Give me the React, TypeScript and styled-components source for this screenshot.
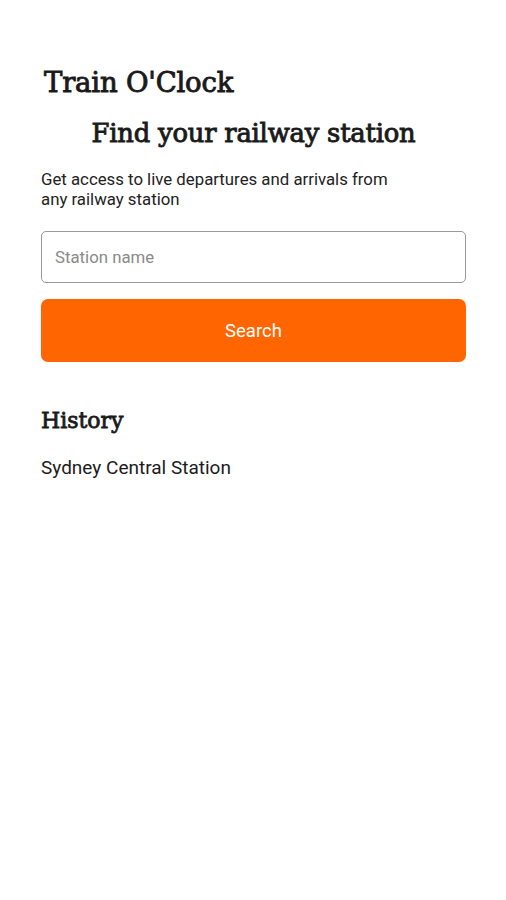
import React, { useState } from 'react'
import styled, { createGlobalStyle } from 'styled-components'

const GlobalStyle = createGlobalStyle`
  html, body {
    margin: 0;
    padding: 0;
    background: #ffffff;
  }
  body {
    font-family: Roboto, "Liberation Sans", sans-serif;
    color: #1c1c1c;
  }
`

const Page = styled.div`
  display: flex;
  flex-direction: column;
  padding: 65px 40px 0 41px;
  min-height: 900px;
  box-sizing: border-box;
`

const AppTitle = styled.h1`
  margin: 0 0 0 3px;
  font-family: "DejaVu Serif", "Liberation Serif", serif;
  font-size: 27.5px;
  font-weight: 400;
  -webkit-text-stroke: 0.9px #1a1a1a;
  letter-spacing: -0.2px;
  line-height: 34px;
  color: #1a1a1a;
`

const Heading = styled.h2`
  margin: 18px 0 0;
  text-align: center;
  font-family: "DejaVu Serif", "Liberation Serif", serif;
  font-size: 25.8px;
  font-weight: 400;
  -webkit-text-stroke: 0.9px #1a1a1a;
  letter-spacing: -0.2px;
  line-height: 32px;
  color: #1a1a1a;
`

const Intro = styled.p`
  margin: 20px 0 0;
  font-size: 16.8px;
  line-height: 20px;
  color: #222;
  max-width: 360px;
`

const SearchForm = styled.form`
  display: flex;
  flex-direction: column;
  gap: 16px;
  margin-top: 22px;
`

const StationInput = styled.input`
  height: 52px;
  box-sizing: border-box;
  border: 1px solid #9a9a9a;
  border-radius: 5px;
  padding: 0 13px;
  font-family: Roboto, "Liberation Sans", sans-serif;
  font-size: 16.8px;
  color: #222;
  outline: none;

  &::placeholder {
    color: #8a8a8a;
  }
`

const SearchButton = styled.button`
  height: 63px;
  border: none;
  border-radius: 7px;
  background: #ff6500;
  color: #ffffff;
  font-family: Roboto, "Liberation Sans", sans-serif;
  font-size: 18.5px;
  cursor: pointer;
`

const SectionTitle = styled.h3`
  margin: 44px 0 0;
  font-family: "DejaVu Serif", "Liberation Serif", serif;
  font-size: 22px;
  font-weight: 400;
  -webkit-text-stroke: 0.8px #1a1a1a;
  line-height: 30px;
  color: #1a1a1a;
`

const HistoryList = styled.ul`
  list-style: none;
  margin: 20px 0 0;
  padding: 0;
`

const HistoryItem = styled.li`
  font-size: 19px;
  line-height: 24px;
  color: #1c1c1c;
`

const App = () => {
  const [station, setStation] = useState('')
  const history = ['Sydney Central Station']

  return (
    <Page>
      <GlobalStyle />
      <AppTitle>Train O'Clock</AppTitle>
      <Heading>Find your railway station</Heading>
      <Intro>Get access to live departures and arrivals from any railway station</Intro>
      <SearchForm onSubmit={(e) => e.preventDefault()}>
        <StationInput
          placeholder='Station name'
          value={station}
          onChange={(e) => setStation(e.target.value)}
        />
        <SearchButton type='submit'>Search</SearchButton>
      </SearchForm>
      <SectionTitle>History</SectionTitle>
      <HistoryList>
        {history.map((item) => (
          <HistoryItem key={item}>{item}</HistoryItem>
        ))}
      </HistoryList>
    </Page>
  )
}

export default App
